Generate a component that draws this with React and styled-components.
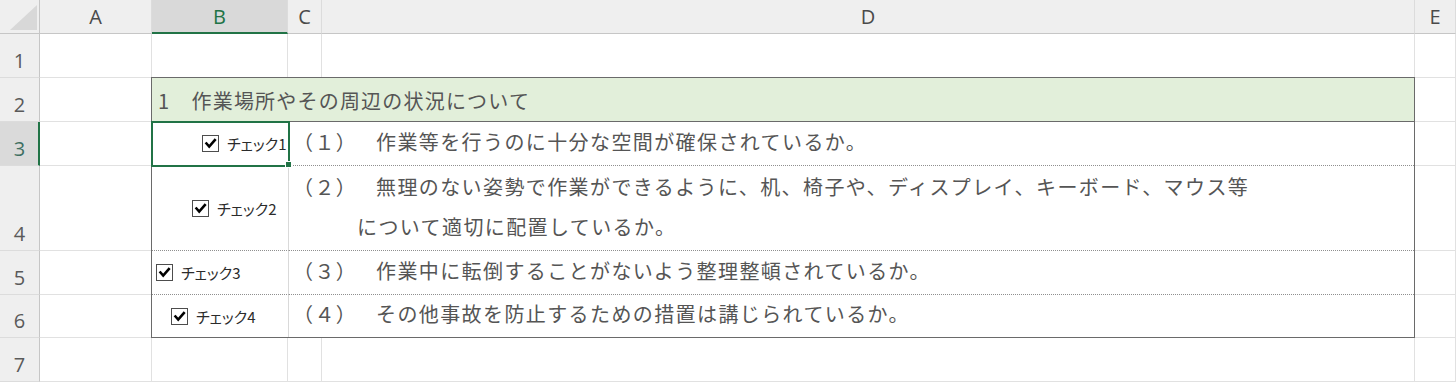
import React from 'react'
import styled, { createGlobalStyle, css } from 'styled-components'

const GlobalStyle = createGlobalStyle`
    html, body {
        margin: 0;
        padding: 0;
        background: #fff;
        overflow: hidden;
    }
`

const JP = `"Noto Sans CJK JP", "Noto Sans", sans-serif`

// Worksheet grid: row header column + columns A..E

const Sheet = styled.div`
    display: grid;
    grid-template-columns: 40px 112px 136px 34px 1093px 41px;
    grid-template-rows: 34px 44px 44px 44px 85px 44px 43px 44px;
    width: 1456px;
    height: 382px;
    overflow: hidden;
    font-family: ${JP};
`

const Corner = styled.div`
    background: #efefef;
    border-right: 1px solid #c6c6c6;
    border-bottom: 1px solid #c6c6c6;
    box-sizing: border-box;
`

const ColHead = styled.div`
    background: #efefef;
    border-right: 1px solid #dcdcdc;
    border-bottom: 1px solid #c6c6c6;
    box-sizing: border-box;
    display: flex;
    align-items: center;
    justify-content: center;
    font-family: "Open Sans", "Noto Sans", sans-serif;
    font-size: 20px;
    color: #4a4a4a;
    ${p => p.active && css`
        background: #d9d9d9;
        border-bottom: 2px solid #217346;
        color: #217346;
        padding-top: 1px;
    `}
`

const RowHead = styled.div`
    background: #efefef;
    border-right: 1px solid #c6c6c6;
    border-bottom: 1px solid #dcdcdc;
    box-sizing: border-box;
    display: flex;
    align-items: flex-end;
    justify-content: center;
    padding-bottom: 3px;
    font-family: "Open Sans", "Noto Sans", sans-serif;
    font-size: 20px;
    line-height: 26px;
    color: #5a5a5a;
    ${p => p.active && css`
        background: #dadada;
        border-right: 2px solid #217346;
        color: #3f6f62;
        padding-left: 1px;
    `}
`

const Cell = styled.div`
    border-right: 1px solid #e1e1e1;
    border-bottom: 1px solid #e1e1e1;
    box-sizing: border-box;
    background: #fff;
`

// The bordered checklist block B2:D6

const Table = styled.div`
    grid-column: 3 / 6;
    grid-row: 3 / 8;
    margin: -1px 0 0 -1px;
    border: 1px solid #6a6a6a;
    display: grid;
    grid-template-columns: 137px 1fr;
    grid-template-rows: 44px 44px 85px 44px 42px;
    position: relative;
    z-index: 1;
    background: #fff;
    color: #555;
    font-size: 20px;
    letter-spacing: 1.4px;
`

const TitleRow = styled.div`
    grid-column: 1 / -1;
    background: #e2efda;
    border-bottom: 1px solid #6a6a6a;
    display: flex;
    align-items: center;
    padding: 1px 0 0 6px;
    white-space: pre;
    letter-spacing: 1.2px;
`

const CheckCell = styled.div`
    border-right: 1px solid #d9d9d9;
    border-bottom: ${p => (p.last ? 'none' : '1px dotted #8f8f8f')};
    display: flex;
    align-items: center;
    padding-left: ${p => p.indent}px;
    position: relative;
    ${p => p.selected && css`
        z-index: 2;
        outline: 2px solid #217346;
        outline-offset: -1px;
        &::after {
            content: '';
            position: absolute;
            right: -4px;
            bottom: -3px;
            width: 5px;
            height: 5px;
            background: #217346;
            border: 1px solid #fff;
        }
    `}
`

const TextCell = styled.div`
    border-bottom: ${p => (p.last ? 'none' : '1px dotted #8f8f8f')};
    display: flex;
    flex-direction: column;
    justify-content: flex-end;
    padding: 0 0 3px 4px;
    line-height: 40px;
    white-space: pre;
`

const Line = styled.div`
    display: flex;
    padding-left: ${p => (p.indent ? 64 : 0)}px;
`

const Num = styled.span`
    width: 83px;
    flex: none;
`

// Form control checkbox

const CheckLabel = styled.label`
    display: flex;
    align-items: center;
    gap: 8px;
    font-family: ${JP};
    font-size: 15px;
    font-feature-settings: "palt";
    letter-spacing: 0;
    color: #2b2b2b;
`

const Box = styled.span`
    width: 15px;
    height: 15px;
    border: 1px solid #4d4d4d;
    background: #fff;
    display: inline-flex;
    align-items: center;
    justify-content: center;
`

const CheckBox = ({ label }) => (
    <CheckLabel>
        <Box>
            <svg width="13" height="13" viewBox="0 0 13 13">
                <path d="M2.5 6.5 L5.2 9.6 L10.8 3.2" fill="none" stroke="#000" strokeWidth="2.6" strokeLinecap="square" />
            </svg>
        </Box>
        {label}
    </CheckLabel>
)

const items = [
    { label: 'チェック1', indent: 50, num: '（１）', lines: ['作業等を行うのに十分な空間が確保されているか。'], selected: true },
    { label: 'チェック2', indent: 40, num: '（２）', lines: ['無理のない姿勢で作業ができるように、机、椅子や、ディスプレイ、キーボード、マウス等', 'について適切に配置しているか。'] },
    { label: 'チェック3', indent: 4, num: '（３）', lines: ['作業中に転倒することがないよう整理整頓されているか。'] },
    { label: 'チェック4', indent: 19, num: '（４）', lines: ['その他事故を防止するための措置は講じられているか。'] },
]

export default function App() {
    const cols = ['A', 'B', 'C', 'D', 'E']
    return (
        <>
            <GlobalStyle />
            <Sheet>
                <Corner>
                    <svg width="40" height="34" viewBox="0 0 40 34">
                        <polygon points="10,30 37,30 37,5" fill="#d8d8d8" />
                    </svg>
                </Corner>
                {cols.map(c => (
                    <ColHead key={c} active={c === 'B'}>{c}</ColHead>
                ))}

                {[1, 2, 3, 4, 5, 6, 7].map(r => {
                    const inTable = r >= 2 && r <= 6
                    const cells = inTable ? ['A', 'E'] : cols
                    return (
                        <React.Fragment key={r}>
                            <RowHead active={r === 3}>{r}</RowHead>
                            {cells.map(c => <Cell key={c} />)}
                        </React.Fragment>
                    )
                })}

                <Table>
                    <TitleRow>{'1　作業場所やその周辺の状況について'}</TitleRow>
                    {items.map((it, i) => (
                        <React.Fragment key={it.label}>
                            <CheckCell indent={it.indent} selected={it.selected} last={i === items.length - 1}>
                                <CheckBox label={it.label} />
                            </CheckCell>
                            <TextCell last={i === items.length - 1}>
                                {it.lines.map((l, j) => (
                                    <Line key={l} indent={j > 0}>
                                        {j === 0 && <Num>{it.num}</Num>}
                                        <span>{l}</span>
                                    </Line>
                                ))}
                            </TextCell>
                        </React.Fragment>
                    ))}
                </Table>
            </Sheet>
        </>
    )
}
